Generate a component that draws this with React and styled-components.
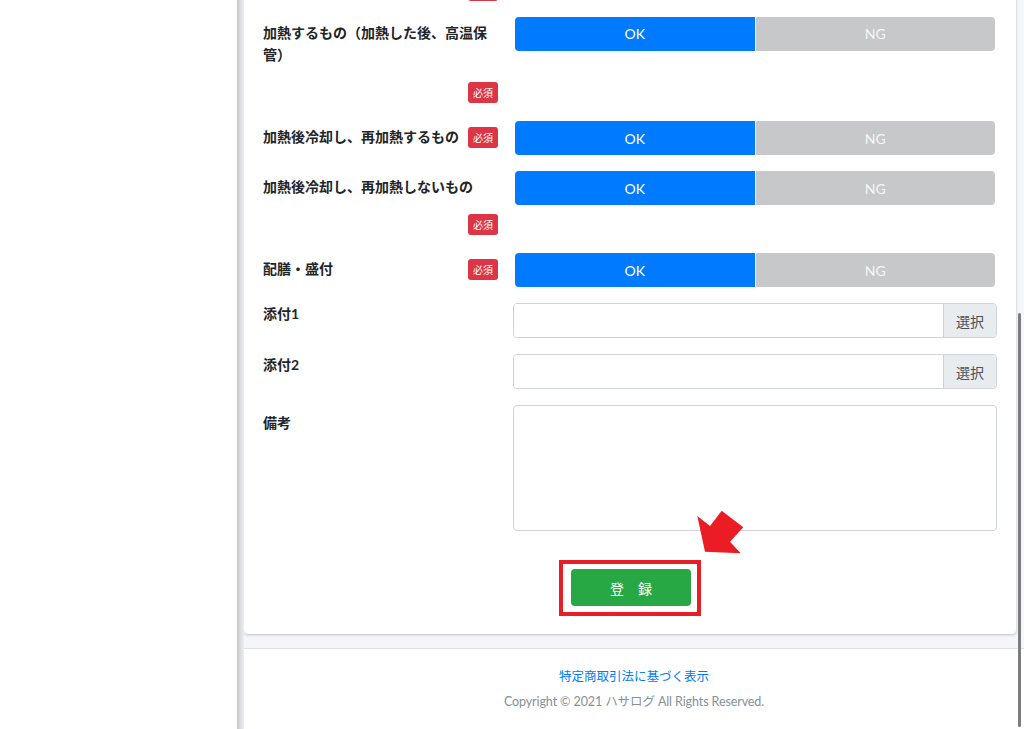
import styled, { createGlobalStyle } from 'styled-components';

const GlobalStyle = createGlobalStyle`
  html,
  body {
    margin: 0;
    height: 729px;
    overflow: hidden;
    background: #ffffff;
  }

  body {
    font-family: 'Lato', 'Noto Sans CJK JP', sans-serif;
    color: #212529;
  }

  * {
    box-sizing: border-box;
  }
`;

const rows = [
  { label: '加熱しないもの（冷蔵・冷凍保管品）', value: 'ok' },
  { label: '加熱するもの（加熱した後、高温保管）', value: 'ok' },
  { label: '加熱後冷却し、再加熱するもの', value: 'ok' },
  { label: '加熱後冷却し、再加熱しないもの', value: 'ok' },
  { label: '配膳・盛付', value: 'ok' },
];

const App = () => (
  <>
    <GlobalStyle />
    <Page>
      <Sidebar />
      <SidebarEdge />
      <Main>
        <Content>
          <Card>
            <CardBody>
              {rows.map((row) => (
                <FormRow key={row.label}>
                  <LabelCol>
                    <LabelText>{row.label}</LabelText>
                    <Badge>必須</Badge>
                  </LabelCol>
                  <ToggleGroup>
                    <Toggle $active={row.value === 'ok'}>OK</Toggle>
                    <Toggle $active={row.value === 'ng'} $last>
                      NG
                    </Toggle>
                  </ToggleGroup>
                </FormRow>
              ))}

              <FormRow>
                <PlainLabel>添付1</PlainLabel>
                <FileInput>
                  <FileName />
                  <FileButton>選択</FileButton>
                </FileInput>
              </FormRow>

              <FormRow>
                <PlainLabel>添付2</PlainLabel>
                <FileInput>
                  <FileName />
                  <FileButton>選択</FileButton>
                </FileInput>
              </FormRow>

              <FormRow>
                <PlainLabel $top={7}>備考</PlainLabel>
                <Remarks />
              </FormRow>

              <SubmitRow>
                <Highlight>
                  <SubmitButton type="button">登　録</SubmitButton>
                  <Arrow viewBox="694 506 52 50" aria-hidden="true">
                    <polygon
                      points="697.3,516 710,526 721.7,510.7 743.3,527.3 730,541.7 740.7,553.3 705,551.7"
                      fill="#ec1c24"
                    />
                  </Arrow>
                </Highlight>
              </SubmitRow>
            </CardBody>
          </Card>
        </Content>

        <Footer>
          <FooterLink href="#">特定商取引法に基づく表示</FooterLink>
          <Copyright>Copyright © 2021 ハサログ All Rights Reserved.</Copyright>
        </Footer>
      </Main>
      <ScrollThumb />
    </Page>
  </>
);

const Page = styled.div`
  position: relative;
  display: flex;
  width: 1024px;
  height: 729px;
  overflow: hidden;
`;

const Sidebar = styled.aside`
  flex: 0 0 237px;
  background: #ffffff;
`;

const SidebarEdge = styled.div`
  flex: 0 0 7px;
  background: linear-gradient(90deg, #c5c6ca 0%, #d9dadd 45%, #eeeff1 100%);
`;

const Main = styled.main`
  flex: 1;
  display: flex;
  flex-direction: column;
  min-width: 0;
`;

const Content = styled.div`
  flex: 1;
  min-height: 0;
  display: flex;
  flex-direction: column;
  justify-content: flex-end;
  overflow: hidden;
  padding: 0 8px 14px 0;
  background: #f4f6f9;
`;

const Card = styled.section`
  flex-shrink: 0;
  background: #ffffff;
  border-radius: 4px;
  box-shadow: 0 0 1px rgba(0, 0, 0, 0.125), 0 1px 3px rgba(0, 0, 0, 0.2);
`;

const CardBody = styled.div`
  padding: 20px 19px 18px;
`;

const FormRow = styled.div`
  display: grid;
  grid-template-columns: 235px 1fr;
  column-gap: 15px;
  align-items: start;
  margin-bottom: 16px;
`;

const LabelCol = styled.div`
  display: flex;
  flex-wrap: wrap;
  align-items: center;
  row-gap: 15.5px;
  padding: 5px 0 2px;

  ${FormRow}:first-child & {
    padding-bottom: 0;
  }
`;

const LabelText = styled.span`
  font-size: 14px;
  line-height: 22.5px;
  font-weight: 700;
  color: #212529;
`;

const PlainLabel = styled.label`
  padding-top: ${(p) => p.$top || 0}px;
  font-size: 14px;
  line-height: 22.5px;
  font-weight: 700;
  color: #212529;
`;

const Badge = styled.span`
  display: inline-flex;
  align-items: center;
  justify-content: center;
  height: 21px;
  margin-left: auto;
  padding: 0 5px;
  border-radius: 3px;
  background: #dc3545;
  color: #ffffff;
  font-size: 10px;
  font-weight: 400;
`;

const ToggleGroup = styled.div`
  display: flex;
  height: 34px;
  margin: 0 2px;
  border-radius: 4px;
  overflow: hidden;
`;

const Toggle = styled.div`
  flex: 1;
  display: flex;
  align-items: center;
  justify-content: center;
  background: ${(p) => (p.$active ? '#007bff' : '#c6c8ca')};
  color: ${(p) => (p.$active ? '#ffffff' : '#f6f7f8')};
  border-left: ${(p) => (p.$last ? '1px solid #eef3fa' : 'none')};
  font-size: 14px;
`;

const FileInput = styled.div`
  display: flex;
  height: 35px;
  border: 1px solid #ced4da;
  border-radius: 4px;
  overflow: hidden;
`;

const FileName = styled.div`
  flex: 1;
  background: #ffffff;
`;

const FileButton = styled.span`
  display: flex;
  align-items: center;
  justify-content: center;
  width: 53px;
  border-left: 1px solid #ced4da;
  background: #e9ecef;
  color: #495057;
  font-size: 14px;
`;

const Remarks = styled.div`
  height: 126px;
  border: 1px solid #ced4da;
  border-radius: 4px;
  background: #ffffff;
`;

const SubmitRow = styled.div`
  display: flex;
  justify-content: center;
  padding-top: 13px;
`;

const Highlight = styled.div`
  position: relative;
  display: inline-flex;
  padding: 5px 6px 6px 8px;
  border: 4px solid #e61e25;
`;

const SubmitButton = styled.button`
  width: 120px;
  height: 37px;
  border: none;
  border-radius: 4px;
  background: #28a745;
  color: #ffffff;
  font-family: 'Noto Sans CJK JP', sans-serif;
  font-size: 14px;
  cursor: pointer;
`;

const Arrow = styled.svg`
  position: absolute;
  left: 131px;
  top: -58px;
  width: 52px;
  height: 50px;
`;

const Footer = styled.footer`
  flex: 0 0 81px;
  display: flex;
  flex-direction: column;
  align-items: center;
  padding-top: 18px;
  gap: 5px;
  border-top: 1px solid #dee2e6;
  background: #ffffff;
  font-size: 12.5px;
  line-height: 20px;
`;

const FooterLink = styled.a`
  color: #007bff;
  text-decoration: none;
`;

const Copyright = styled.div`
  color: #869099;
  letter-spacing: -0.1px;
`;

const ScrollThumb = styled.div`
  position: absolute;
  top: 313px;
  bottom: 2px;
  left: 1018px;
  width: 3px;
  border-radius: 2px;
  background: #7c7c7c;
`;

export default App;
